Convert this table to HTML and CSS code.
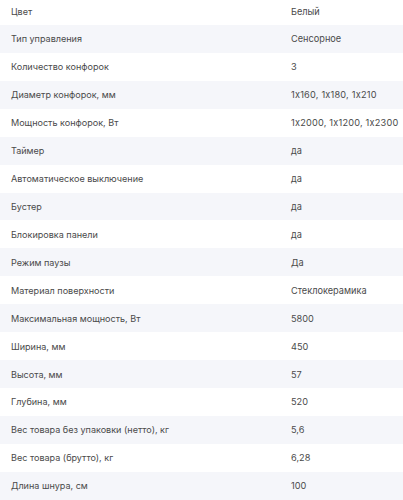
FILE: index.html
```html
<!DOCTYPE html>
<html lang="ru">
<head>
<meta charset="utf-8">
<link rel="stylesheet" href="styles.css">
</head>
<body>
<div class="specs">
  <div class="row"><div class="name">Цвет</div><div class="val">Белый</div></div>
  <div class="row"><div class="name">Тип управления</div><div class="val">Сенсорное</div></div>
  <div class="row"><div class="name">Количество конфорок</div><div class="val">3</div></div>
  <div class="row"><div class="name">Диаметр конфорок, мм</div><div class="val num">1x160, 1x180, 1x210</div></div>
  <div class="row"><div class="name">Мощность конфорок, Вт</div><div class="val num">1x2000, 1x1200, 1x2300</div></div>
  <div class="row"><div class="name">Таймер</div><div class="val">да</div></div>
  <div class="row"><div class="name">Автоматическое выключение</div><div class="val">да</div></div>
  <div class="row"><div class="name">Бустер</div><div class="val">да</div></div>
  <div class="row"><div class="name">Блокировка панели</div><div class="val">да</div></div>
  <div class="row"><div class="name">Режим паузы</div><div class="val">Да</div></div>
  <div class="row"><div class="name">Материал поверхности</div><div class="val">Стеклокерамика</div></div>
  <div class="row"><div class="name">Максимальная мощность, Вт</div><div class="val">5800</div></div>
  <div class="row"><div class="name">Ширина, мм</div><div class="val">450</div></div>
  <div class="row"><div class="name">Высота, мм</div><div class="val">57</div></div>
  <div class="row"><div class="name">Глубина, мм</div><div class="val">520</div></div>
  <div class="row"><div class="name">Вес товара без упаковки (нетто), кг</div><div class="val">5,6</div></div>
  <div class="row"><div class="name">Вес товара (брутто), кг</div><div class="val">6,28</div></div>
  <div class="row"><div class="name">Длина шнура, см</div><div class="val">100</div></div>
</div>
</body>
</html>
```
FILE: styles.css
```css
html, body {
  margin: 0;
  padding: 0;
  background: #ffffff;
}
body {
  font-family: Inter, "Noto Sans", sans-serif;
  font-size: 9.2px;
  font-feature-settings: "calt" 0;
  color: #4a4a4a;
}
.specs {
  margin-top: -2.9px;
  display: flex;
  flex-direction: column;
}
.row {
  display: grid;
  grid-template-columns: 291px 1fr;
  align-items: center;
  height: 27.93px;
}
.row:nth-child(even) {
  background: #f5f6fa;
}
.name {
  padding-left: 11px;
  font-size: 9.05px;
  white-space: nowrap;
}
.val {
  white-space: nowrap;
}
.num {
  letter-spacing: 0.2px;
}
```
